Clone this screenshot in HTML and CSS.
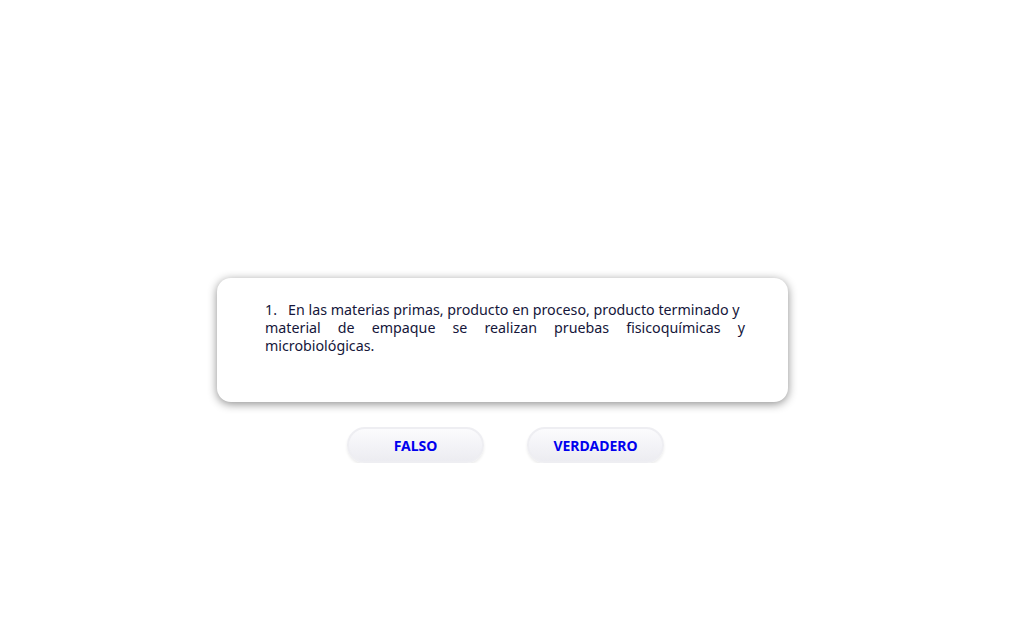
FILE: index.html
```html
<!DOCTYPE html>
<html lang="es">
<head>
<meta charset="utf-8">
<link rel="stylesheet" href="styles.css">
</head>
<body>
<main class="quiz">
  <section class="card">
    <p class="question">1.&nbsp;&nbsp; En las materias primas, producto en proceso, producto terminado y<br>material de empaque se realizan pruebas fisicoquímicas y microbiológicas.</p>
  </section>
  <div class="answers">
    <button class="btn">FALSO</button>
    <button class="btn">VERDADERO</button>
  </div>
</main>
</body>
</html>
```
FILE: styles.css
```css
html, body {
  margin: 0;
  padding: 0;
  background: #fff;
}
.quiz {
  padding: 278px 0 0 217px;
  font-family: "Noto Sans", "Open Sans", sans-serif;
}
.card {
  box-sizing: border-box;
  width: 571px;
  height: 124px;
  padding: 23px 43px 0 48px;
  background: #fff;
  border-radius: 14px;
  box-shadow: 0 2px 10px rgba(0, 0, 0, 0.45);
}
.question {
  margin: 0;
  font-size: 14.25px;
  line-height: 18px;
  color: #15163a;
  text-align: justify;
}
.answers {
  display: flex;
  gap: 43px;
  padding: 25px 0 0 130px;
}
.btn {
  box-sizing: border-box;
  width: 137px;
  height: 36px;
  border: 2px solid #eeeef2;
  border-radius: 18px;
  background: linear-gradient(#fbfbfd, #ececf1);
  box-shadow: 0 2px 3px rgba(0, 0, 0, 0.08);
  font-family: "Noto Sans", "Open Sans", sans-serif;
  font-weight: 700;
  font-size: 14px;
  color: #0000ee;
  padding: 0;
}
```
